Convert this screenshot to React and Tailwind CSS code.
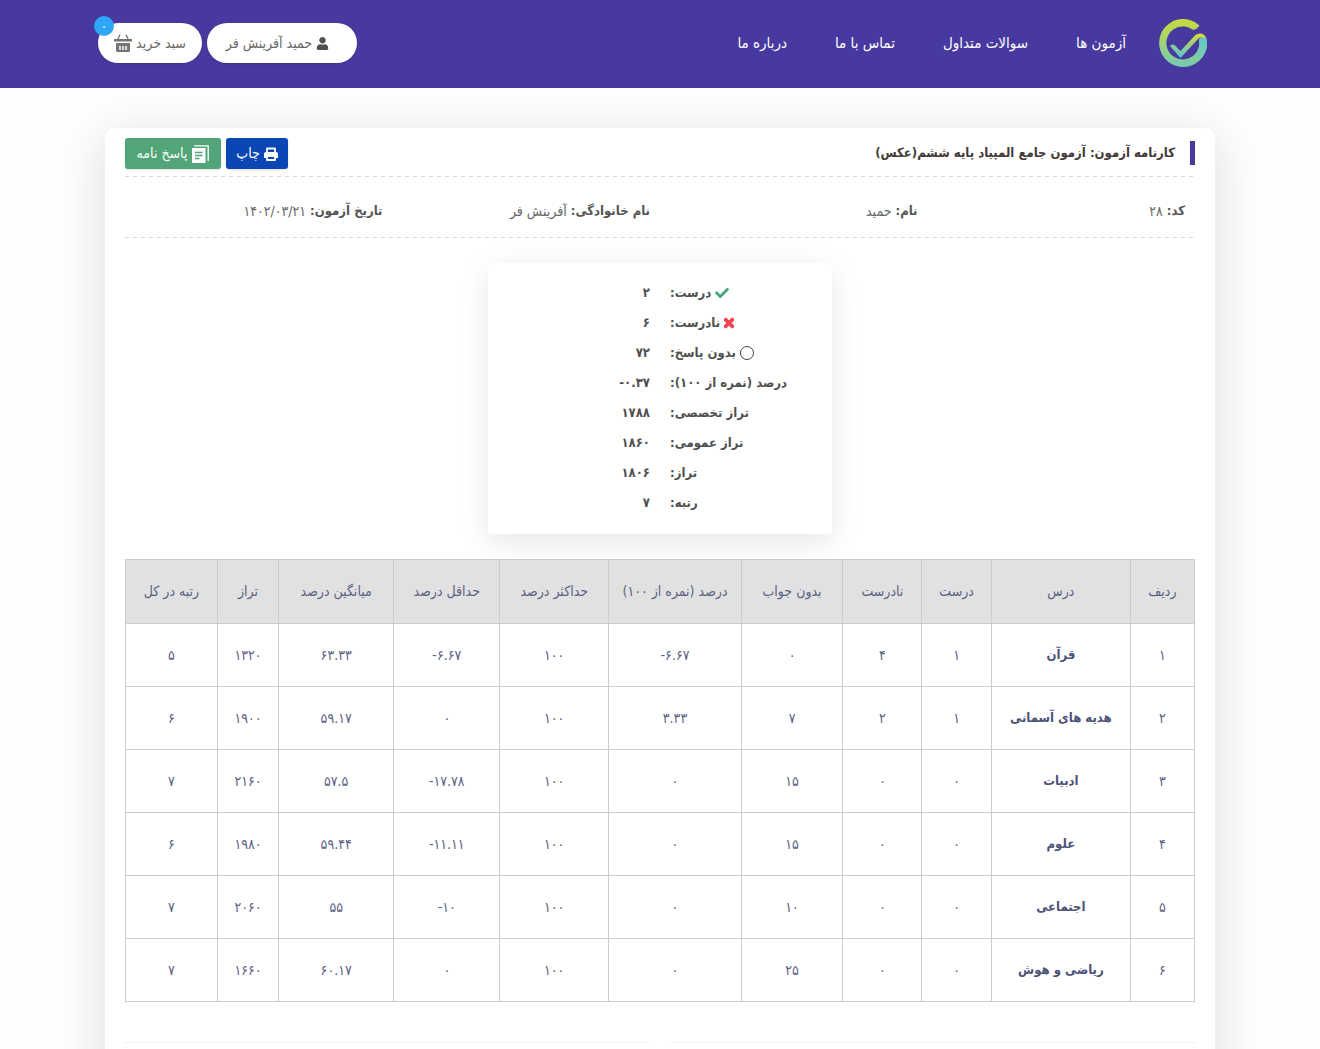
import { FaCheck, FaTimes, FaUser } from "react-icons/fa";

const navLinks = ["آزمون ها", "سوالات متداول", "تماس با ما", "درباره ما"];

const studentInfo = [
  { label: "کد:", value: "۲۸" },
  { label: "نام:", value: "حمید" },
  { label: "نام خانوادگی:", value: "آفرینش فر" },
  { label: "تاریخ آزمون:", value: "۱۴۰۲/۰۳/۲۱" },
];

const summary = [
  { label: "درست:", value: "۲", icon: <FaCheck className="size-[14px] text-[#46a878]" /> },
  {
    label: "نادرست:",
    value: "۶",
    icon: <FaTimes className="h-[14px] w-[10px] text-[#f0434f]" stroke="currentColor" strokeWidth="40" />,
  },
  {
    label: "بدون پاسخ:",
    value: "۷۲",
    icon: <span className="size-[14px] rounded-full border border-[#444]" />,
  },
  { label: "درصد (نمره از ۱۰۰):", value: "-۰.۳۷" },
  { label: "تراز تخصصی:", value: "۱۷۸۸" },
  { label: "تراز عمومی:", value: "۱۸۶۰" },
  { label: "تراز:", value: "۱۸۰۶" },
  { label: "رتبه:", value: "۷" },
];

// Columnas de la tabla con su ancho relativo
const columns = [
  { title: "ردیف", width: "w-[6%]" },
  { title: "درس", width: "w-[13%]" },
  { title: "درست", width: "w-[6.5%]" },
  { title: "نادرست", width: "w-[7.4%]" },
  { title: "بدون جواب", width: "w-[9.5%]" },
  { title: "درصد (نمره از ۱۰۰)", width: "w-[12.4%]" },
  { title: "حداکثر درصد", width: "w-[10.2%]" },
  { title: "حداقل درصد", width: "w-[9.9%]" },
  { title: "میانگین درصد", width: "w-[10.8%]" },
  { title: "تراز", width: "w-[5.7%]" },
  { title: "رتبه در کل", width: "w-[8.6%]" },
];

const rows = [
  ["۱", "قرآن", "۱", "۴", "۰", "-۶.۶۷", "۱۰۰", "-۶.۶۷", "۶۳.۳۳", "۱۳۲۰", "۵"],
  ["۲", "هدیه های آسمانی", "۱", "۲", "۷", "۳.۳۳", "۱۰۰", "۰", "۵۹.۱۷", "۱۹۰۰", "۶"],
  ["۳", "ادبیات", "۰", "۰", "۱۵", "۰", "۱۰۰", "-۱۷.۷۸", "۵۷.۵", "۲۱۶۰", "۷"],
  ["۴", "علوم", "۰", "۰", "۱۵", "۰", "۱۰۰", "-۱۱.۱۱", "۵۹.۴۴", "۱۹۸۰", "۶"],
  ["۵", "اجتماعی", "۰", "۰", "۱۰", "۰", "۱۰۰", "-۱۰", "۵۵", "۲۰۶۰", "۷"],
  ["۶", "ریاضی و هوش", "۰", "۰", "۲۵", "۰", "۱۰۰", "۰", "۶۰.۱۷", "۱۶۶۰", "۷"],
];

const Logo = () => (
  <svg viewBox="0 0 48 48" className="size-12" fill="none" aria-hidden="true">
    <defs>
      <linearGradient id="ring" x1="0" y1="0" x2="0" y2="1">
        <stop offset="0" stopColor="#c9dc3c" />
        <stop offset="1" stopColor="#74c9b4" />
      </linearGradient>
      <linearGradient id="ringEnd" x1="0" y1="0" x2="0" y2="1">
        <stop offset="0" stopColor="#5fc3cf" />
        <stop offset="1" stopColor="#7fcfa5" />
      </linearGradient>
      <linearGradient id="tick" x1="0.8" y1="0" x2="0.3" y2="1">
        <stop offset="0" stopColor="#d5dc35" />
        <stop offset="1" stopColor="#5fc3cf" />
      </linearGradient>
    </defs>
    <path
      d="M40.5 6.5A24 24 0 1 0 48 22C47 17 42 17 40 20.5A16.5 16.5 0 1 1 33 10.2C36.5 12 38.500 9 40.5 6.5Z"
      fill="url(#ring)"
    />
    <path
      d="M48 22A24 24 0 0 1 41.500 40L36 35.500A16.500 16.500 0 0 0 40 20.500C42 17 47 17 48 22Z"
      fill="url(#ringEnd)"
    />
    <path
      d="M11 27C12.500 25 15 25 16.500 27L21.500 32L35 17.500C38.500 13 45.500 13 47.500 20C44 17.500 41 18 38.500 20.500L21.500 39Z"
      fill="url(#tick)"
    />
  </svg>
);

const BasketIcon = () => (
  <svg viewBox="0 0 18 18" className="size-[18px]" aria-hidden="true">
    <path d="M6 .5L3.500 6M12 .5L14.500 6" stroke="#757575" strokeWidth="1.300" />
    <path d="M0 5h18v2.500H0zM2 9h14V16.500a1.500 1.500 0 0 1-1.500 1.500h-11A1.500 1.500 0 0 1 2 16.500z" fill="#757575" />
    <path d="M6 12v4M9 12v4M12 12v4" stroke="#fff" strokeWidth="1.500" />
  </svg>
);

const PrintIcon = () => (
  <svg viewBox="0 0 14 14" className="size-[14px]" aria-hidden="true">
    <path d="M3 5V1.500h8V5" fill="none" stroke="#fff" strokeWidth="1.800" strokeLinejoin="round" />
    <path d="M2 5h10a2 2 0 0 1 2 2v4h-2.500V9h-9v2H0V7a2 2 0 0 1 2-2z" fill="#fff" />
    <path d="M3 9v4h8V9z" fill="none" stroke="#fff" strokeWidth="1.800" strokeLinejoin="round" />
  </svg>
);

const AnswersIcon = () => (
  <svg viewBox="0 0 18 18" className="size-[18px]" aria-hidden="true">
    <path d="M3 .8h14.200V16" fill="none" stroke="#fff" strokeWidth="1.300" />
    <path d="M1 3h13.500v15H1z" fill="#fff" />
    <path d="M4 7.500h7.500M4 10.500h7.500M4 13.500h4.500" stroke="#52a578" strokeWidth="1.300" />
  </svg>
);

const DashedLine = () => (
  <div className="h-px bg-[repeating-linear-gradient(to_right,#d3d5dc_0_4px,transparent_4px_8px)]" />
);

const Header = () => (
  <header className="h-[88px] bg-[#4839a0]">
    <div className="mx-auto flex h-[86px] max-w-[1140px] items-center justify-between pr-[23px] pl-2">
      <div className="flex items-center gap-[33px]">
        <a href="#" aria-label="صفحه اصلی">
          <Logo />
        </a>
        <nav className="flex gap-12">
          {navLinks.map((link) => (
            <a key={link} href="#" className="text-[15px] whitespace-nowrap text-white">
              {link}
            </a>
          ))}
        </nav>
      </div>

      <div className="flex items-center gap-[5px] text-[14px] text-[#666]">
        <button
          type="button"
          className="flex h-10 w-[150px] items-center gap-1 rounded-full bg-white pr-7 whitespace-nowrap shadow-sm"
        >
          <FaUser className="size-[13px] text-[#505050]" />
          حمید آفرینش فر
        </button>
        <button
          type="button"
          className="relative flex h-10 w-[104px] items-center justify-center gap-1 rounded-full bg-white whitespace-nowrap shadow-sm"
        >
          سبد خرید
          <BasketIcon />
          <span className="absolute -top-[7px] -left-1 flex size-5 items-center justify-center rounded-full bg-[#2fa6f7] text-white">
            ۰
          </span>
        </button>
      </div>
    </div>
  </header>
);

const SummaryBox = () => (
  <dl className="mx-auto mt-[25px] w-[344px] rounded bg-white pt-[15px] pb-4 text-[13px] font-bold text-[#505050] shadow-[0_8px_30px_rgba(0,0,0,0.1)]">
    {summary.map(({ label, value, icon }) => (
      <div key={label} className="grid h-[30px] grid-cols-2 items-center">
        <dt className="flex items-center justify-end gap-1 pl-[10px] whitespace-nowrap">
          {icon}
          {label}
        </dt>
        <dd className="pr-[10px] text-right">
          <span dir="ltr">{value}</span>
        </dd>
      </div>
    ))}
  </dl>
);

const ResultsTable = () => (
  <table className="mt-[25px] w-full table-fixed border-collapse text-center text-[14px] text-[#5c6084]">
    <thead>
      <tr className="h-16 bg-[#e1e1e1]">
        {columns.map(({ title, width }) => (
          <th key={title} className={`${width} border border-[#ccc] font-normal whitespace-nowrap`}>
            {title}
          </th>
        ))}
      </tr>
    </thead>
    <tbody>
      {rows.map((row) => (
        <tr key={row[0]} className="h-[63px]">
          {row.map((cell, i) => (
            <td
              key={i}
              className={`border border-[#ccc] ${i === 1 ? "text-[13px] font-bold text-[#4d5278]" : ""}`}
            >
              <span dir={i === 1 ? "rtl" : "ltr"}>{cell}</span>
            </td>
          ))}
        </tr>
      ))}
    </tbody>
  </table>
);

const App = () => {
  return (
    <div
      dir="rtl"
      className="min-h-screen overflow-hidden bg-[#fefefe] font-['DejaVu_Sans_Condensed','DejaVu_Sans',sans-serif]"
    >
      <Header />

      <main className="mx-auto mt-10 max-w-[1110px] rounded-[10px] bg-white px-5 pt-[10px] shadow-[0_10px_50px_rgba(20,20,50,0.15)]">
        {/* Título y acciones */}
        <div className="flex h-[38px] items-start justify-between">
          <h1 className="mt-[3px] border-r-[5px] border-[#4839a0] pr-[15px] text-[13px] leading-6 font-bold text-[#443838]">
            کارنامه آزمون: آزمون جامع المپیاد پایه ششم(عکس)
          </h1>
          <div className="flex gap-[5px] text-[14px] text-white">
            <button
              type="button"
              className="flex h-[31px] w-[62px] items-center justify-center gap-1 rounded-[3px] bg-[#0a47b4] shadow-sm"
            >
              <PrintIcon />
              چاپ
            </button>
            <button
              type="button"
              className="flex h-[31px] w-24 items-center justify-center gap-1 rounded-[3px] bg-[#52a578] whitespace-nowrap shadow-sm"
            >
              <AnswersIcon />
              پاسخ نامه
            </button>
          </div>
        </div>
        <DashedLine />

        {/* Datos del estudiante */}
        <dl className="grid h-[60px] grid-cols-4 items-center pt-2 text-[13px] text-[#555]">
          {studentInfo.map(({ label, value }) => (
            <div key={label} className="flex items-center gap-1 px-[10px] whitespace-nowrap">
              <dt className="font-bold">{label}</dt>
              <dd className="text-[14px] text-[#666]">{value}</dd>
            </div>
          ))}
        </dl>
        <DashedLine />

        <SummaryBox />
        <ResultsTable />

        {/* Secciones inferiores */}
        <div className="mt-10 grid h-20 grid-cols-2 gap-5">
          <section className="border-t border-[#f1f1f1]" />
          <section className="border-t border-[#f1f1f1]" />
        </div>
      </main>
    </div>
  );
};

export default App;
